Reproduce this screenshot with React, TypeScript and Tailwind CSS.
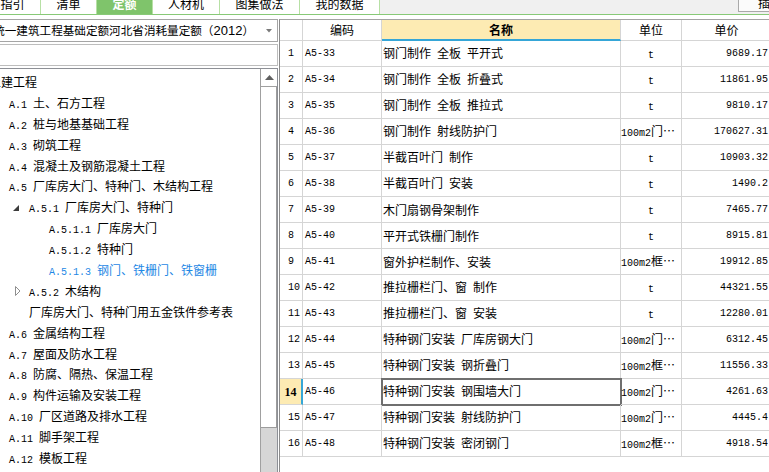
import React from "react";

const CJK = "font-['Noto_Sans_CJK_SC',sans-serif]";

// SimSun-like look: ascii runs in a half-width mono face, the rest in the CJK face
const Mix = ({ s }: { s: string }) => (
  <span className="whitespace-pre">
    {s
      .split(/([\x20-\x7e]+)/)
      .filter(Boolean)
      .map((p, i) =>
        /^[\x20-\x7e]+$/.test(p) ? (
          <span key={i} className="font-['Liberation_Mono',monospace] text-[10px]">
            {p}
          </span>
        ) : (
          <span key={i}>{p}</span>
        )
      )}
  </span>
);

const TABS = [
  { name: "指引", cls: "w-[56px] -ml-[15px] bg-white" },
  { name: "清单", cls: "w-[56px] bg-white" },
  { name: "定额", cls: "w-[56px] bg-[#7fc46b] text-white font-bold" },
  { name: "人材机", cls: "w-[67px] bg-white" },
  { name: "图集做法", cls: "w-[80px] bg-white" },
  { name: "我的数据", cls: "w-[80px] bg-white" },
];

type Node = { lv: number; text: string; icon?: "open" | "closed"; sel?: boolean };

const TREE: Node[] = [
  { lv: 0, text: "土建工程" },
  { lv: 1, text: "A.1 土、石方工程" },
  { lv: 1, text: "A.2 桩与地基基础工程" },
  { lv: 1, text: "A.3 砌筑工程" },
  { lv: 1, text: "A.4 混凝土及钢筋混凝土工程" },
  { lv: 1, text: "A.5 厂库房大门、特种门、木结构工程" },
  { lv: 2, text: "A.5.1 厂库房大门、特种门", icon: "open" },
  { lv: 3, text: "A.5.1.1 厂库房大门" },
  { lv: 3, text: "A.5.1.2 特种门" },
  { lv: 3, text: "A.5.1.3 钢门、铁栅门、铁窗栅", sel: true },
  { lv: 2, text: "A.5.2 木结构", icon: "closed" },
  { lv: 2, text: "厂库房大门、特种门用五金铁件参考表" },
  { lv: 1, text: "A.6 金属结构工程" },
  { lv: 1, text: "A.7 屋面及防水工程" },
  { lv: 1, text: "A.8 防腐、隔热、保温工程" },
  { lv: 1, text: "A.9 构件运输及安装工程" },
  { lv: 1, text: "A.10 厂区道路及排水工程" },
  { lv: 1, text: "A.11 脚手架工程" },
  { lv: 1, text: "A.12 模板工程" },
];

const INDENT = ["pl-0", "pl-[4px]", "pl-[24px]", "pl-[44px]"];

const ROWS: [string, string, string, string][] = [
  ["A5-33", "钢门制作 全板 平开式", "t", "9689.17"],
  ["A5-34", "钢门制作 全板 折叠式", "t", "11861.95"],
  ["A5-35", "钢门制作 全板 推拉式", "t", "9810.17"],
  ["A5-36", "钢门制作 射线防护门", "100m2门⋯", "170627.31"],
  ["A5-37", "半截百叶门 制作", "t", "10903.32"],
  ["A5-38", "半截百叶门 安装", "t", "1490.2"],
  ["A5-39", "木门扇钢骨架制作", "t", "7465.77"],
  ["A5-40", "平开式铁栅门制作", "t", "8915.81"],
  ["A5-41", "窗外护栏制作、安装", "100m2框⋯", "19912.85"],
  ["A5-42", "推拉栅栏门、窗 制作", "t", "44321.55"],
  ["A5-43", "推拉栅栏门、窗 安装", "t", "12280.01"],
  ["A5-44", "特种钢门安装 厂库房钢大门", "100m2门⋯", "6312.45"],
  ["A5-45", "特种钢门安装 钢折叠门", "100m2框⋯", "11556.33"],
  ["A5-46", "特种钢门安装 钢围墙大门", "100m2门⋯", "4261.63"],
  ["A5-47", "特种钢门安装 射线防护门", "100m2门⋯", "4445.4"],
  ["A5-48", "特种钢门安装 密闭钢门", "100m2框⋯", "4918.54"],
];

const COLS = "grid grid-cols-[23px_79px_239px_61px_90px]";
const CELL = "border-r border-b border-[#d5d5d5] flex items-center overflow-hidden whitespace-nowrap";

const App = () => {
  return (
    <div className={`w-[769px] h-[472px] overflow-hidden bg-white text-black text-[12px] ${CJK}`}>
      {/* tab strip, scrolled so only the lower half shows */}
      <div className="flex h-[15px] border-b border-[#88c977] bg-[#f0f0f0] overflow-hidden">
        {TABS.map((t) => (
          <div
            key={t.name}
            className={`shrink-0 h-full flex justify-center border-r border-[#b7e0a5] overflow-hidden ${t.cls}`}
          >
            <span className="-mt-[3px] leading-[14px]">{t.name}</span>
          </div>
        ))}
        <div className="ml-[358px] shrink-0 w-[44px] h-[12px] border border-t-0 border-[#a9a9a9] bg-[#fbfbfb] overflow-hidden">
          <div className="-mt-[4px] pl-[19px] leading-[14px]">插入</div>
        </div>
      </div>

      <div className="flex pt-[4px] h-[457px]">
        {/* left: quota book + chapter tree */}
        <div className="w-[278px] shrink-0 flex flex-col">
          <div className="h-[23px] shrink-0 border-y border-r border-[#a5a5a5] flex items-center">
            <div className="flex-1 flex justify-end items-baseline overflow-hidden whitespace-nowrap pr-[7px] text-[11.6px]">
              <span>全国统一建筑工程基础定额河北省消耗量定额（</span>
              <span className="font-['Liberation_Sans',sans-serif] text-[13px]">2012</span>
              <span>）</span>
            </div>
            <div className="w-[16px] flex justify-center">
              <svg width="6" height="4" viewBox="0 0 6 4">
                <polygon points="0,0 6,0 3,3.5" fill="#7a7a7a" />
              </svg>
            </div>
          </div>
          <div className="mt-[2px] h-[22px] shrink-0 border-y border-r border-[#bdbdbd]" />
          <div className="mt-[2px] flex-1 flex min-h-0 border-t border-r border-[#8d9096]">
            <div className="flex-1 overflow-hidden pt-[3px]">
              <div className="-ml-[11px]">
                {TREE.map((n) => (
                  <div
                    key={n.text}
                    className={`h-[20.9px] flex items-center whitespace-nowrap ${INDENT[n.lv]} ${
                      n.sel ? "text-[#1e88e5]" : ""
                    }`}
                  >
                    {n.lv > 0 && (
                      <div className="w-[16px] shrink-0 flex items-center">
                        {n.icon === "open" && (
                          <svg width="6" height="6" viewBox="0 0 6 6">
                            <polygon points="6,0 6,6 0,6" fill="#3c3c3c" />
                          </svg>
                        )}
                        {n.icon === "closed" && (
                          <svg className="ml-[2px]" width="6" height="10" viewBox="0 0 6 10">
                            <polygon points="0.5,0.5 5,5 0.5,9.5" fill="none" stroke="#8f8f8f" />
                          </svg>
                        )}
                      </div>
                    )}
                    <Mix s={n.text} />
                  </div>
                ))}
              </div>
            </div>
            {/* vertical scrollbar */}
            <div className="w-[17px] shrink-0 border-l border-[#a0a0a0] flex flex-col">
              <div className="h-[18px] shrink-0 border-b border-[#a0a0a0] bg-white flex items-center justify-center">
                <svg width="9" height="5" viewBox="0 0 9 5">
                  <polygon points="0,5 9,5 4.5,0" fill="#606060" />
                </svg>
              </div>
              <div className="h-[341px] shrink-0 bg-white border-r border-b border-[#9c9c9c]" />
              <div className="flex-1 bg-[#d6d6d6]" />
            </div>
          </div>
        </div>

        <div className="w-[1px] shrink-0" />

        {/* right: quota list */}
        <div className="flex-1 overflow-hidden border-l border-t border-l-[#8c8c8c] border-t-[#a3a3a3]">
          <div className={`${COLS} h-[21px]`}>
            <div className={CELL} />
            <div className={`${CELL} justify-center`}>编码</div>
            <div className="border-r border-[#d5d5d5] border-b-2 border-b-[#35a6d7] bg-[#fdebb3] flex items-center justify-center font-bold">
              名称
            </div>
            <div className={`${CELL} justify-center`}>单位</div>
            <div className={`${CELL} justify-center`}>单价</div>
          </div>
          {ROWS.map(([code, name, unit, price], i) => {
            const cur = i === 13;
            return (
              <div key={code} className={`${COLS} h-[26px]`}>
                {cur ? (
                  <div className={`${CELL} justify-center bg-[#fdebb3] border-r-2 border-r-[#35a6d7] font-['Liberation_Serif',serif] font-bold text-[12px]`}>
                    {i + 1}
                  </div>
                ) : (
                  <div className={`${CELL} pl-[8px] font-['Liberation_Mono',monospace] text-[10px]`}>{i + 1}</div>
                )}
                <div className={`${CELL} pl-[2px] font-['Liberation_Mono',monospace] text-[10px]`}>{code}</div>
                <div
                  className={`${CELL} pl-[1px] ${
                    cur ? "outline-2 outline-[#6f6f6f] -outline-offset-1" : ""
                  }`}
                >
                  <Mix s={name} />
                </div>
                <div className={`${CELL} ${unit.length > 1 ? "pl-0" : "justify-center"}`}>
                  <Mix s={unit} />
                </div>
                <div className={`${CELL} justify-end pr-[3px] font-['Liberation_Mono',monospace] text-[10px]`}>
                  {price}
                </div>
              </div>
            );
          })}
        </div>
      </div>
    </div>
  );
};

export default App;
